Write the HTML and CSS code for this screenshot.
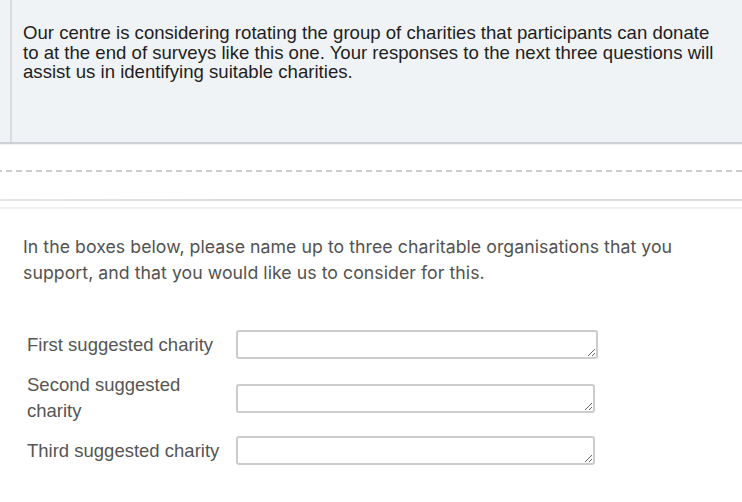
FILE: index.html
```html
<!DOCTYPE html>
<html lang="en">
<head>
<meta charset="utf-8">
<title>Charity survey</title>
<link rel="stylesheet" href="styles.css">
</head>
<body>
<div class="intro">
  <div class="intro-inner">
    <p class="intro-text">Our centre is considering rotating the group of charities that participants can donate to at the end of surveys like this one. Your responses to the next three questions will assist us in identifying suitable charities.</p>
  </div>
</div>
<div class="page-break"></div>
<div class="sep-a"></div>
<div class="sep-b"></div>
<div class="question">
  <p class="q-text">In the boxes below, please name up to three charitable organisations that you support, and that you would like us to consider for this.</p>
  <div class="fields">
    <div class="row">
      <label class="lbl" for="c1">First suggested charity</label>
      <textarea id="c1" class="box box-wide"></textarea>
    </div>
    <div class="row">
      <label class="lbl" for="c2">Second suggested charity</label>
      <textarea id="c2" class="box"></textarea>
    </div>
    <div class="row">
      <label class="lbl" for="c3">Third suggested charity</label>
      <textarea id="c3" class="box"></textarea>
    </div>
  </div>
</div>
</body>
</html>
```
FILE: styles.css
```css
* { box-sizing: border-box; }
html, body { margin: 0; padding: 0; background: #ffffff; }
body { width: 742px; height: 502px; overflow: hidden; }

.intro {
  background: #f0f3f6;
  padding-left: 10px;
  border-bottom: 2px solid #cdd0d4;
  box-shadow: 0 1px 1px rgba(0,0,0,0.05);
}
.intro-inner {
  border-left: 2px solid #d9dcdf;
  height: 142px;
  padding: 23px 0 0 11px;
}
.intro-text {
  margin: 0;
  width: 700px;
  font-family: "Liberation Sans", Arial, sans-serif;
  font-size: 18.6px;
  line-height: 19.5px;
  color: #1e1e1e;
}

.page-break {
  margin-top: 26px;
  height: 2px;
  background: repeating-linear-gradient(90deg, #cccccc 0 6px, transparent 6px 10px);
  background-position: -4px 0;
}
.sep-a {
  margin-top: 27px;
  height: 2px;
  background: linear-gradient(90deg, #e6e6e6, #dcdcdc 30%, #dcdcdc);
}
.sep-b {
  margin-top: 6px;
  height: 2px;
  background: #efefef;
}

.question { padding: 25px 0 0 23px; }
.q-text {
  margin: 0;
  width: 670px;
  font-family: Inter, "Noto Sans", sans-serif;
  font-size: 17.7px;
  line-height: 26px;
  letter-spacing: 0.05px;
  color: #525252;
}
.fields {
  margin-top: 44px;
  display: flex;
  flex-direction: column;
  padding-left: 4px;
}
.row {
  display: flex;
  align-items: center;
}
.row + .row { margin-top: 13px; }
.row:nth-child(3) { margin-top: 12px; }
.lbl {
  width: 209px;
  padding-right: 9px;
  font-family: "Liberation Sans", Arial, sans-serif;
  font-size: 18.5px;
  line-height: 26px;
  color: #555555;
}
.box {
  flex: none;
  width: 359px;
  height: 29px;
  margin: 0;
  border: 2px solid #cccccc;
  border-radius: 3px;
  background: #ffffff;
  resize: vertical;
  font-family: "Liberation Sans", Arial, sans-serif;
  font-size: 15px;
  padding: 4px;
}
.box-wide { width: 362px; }
```
